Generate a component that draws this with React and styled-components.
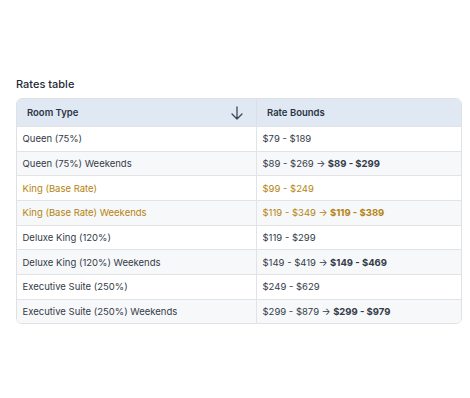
import React from "react";
import styled, { createGlobalStyle } from "styled-components";

const Global = createGlobalStyle`
  html, body { margin: 0; padding: 0; background: #ffffff; }
  body { font-family: Inter, "Noto Sans", sans-serif; color: #1f2937; }
`;

const Page = styled.div`
  padding: 76px 8px 0 16px;
  width: 470px;
  box-sizing: border-box;
`;

const Title = styled.div`
  font-size: 11px;
  font-weight: 500;
  color: #1f2937;
  line-height: 16px;
  margin-bottom: 6px;
`;

const Frame = styled.div`
  width: 446px;
  border: 1px solid #dfe1e5;
  border-radius: 6px;
  overflow: hidden;
  box-sizing: border-box;
  font-size: 9.5px;
`;

const Row = styled.div`
  display: grid;
  grid-template-columns: 239px 1fr;
  background: ${(p) => (p.$head ? "#dfe8f3" : p.$alt ? "#f7f8fa" : "#ffffff")};
  height: ${(p) => (p.$head ? "27px" : "23.66px")};
  border-bottom: ${(p) => (p.$last ? "none" : "1px solid #e1e3e6")};
`;

const HeadCell = styled.div`
  display: flex;
  align-items: center;
  justify-content: space-between;
  padding: 0 11px 0 10px;
  font-weight: 600;
  color: #2b3444;
  border-left: ${(p) => (p.$first ? "none" : "1px solid #dcdfe3")};
`;

const Cell = styled.div`
  display: flex;
  align-items: center;
  padding: 0 5.5px;
  color: ${(p) => (p.$gold ? "#b5830f" : "#333b48")};
  border-left: ${(p) => (p.$first ? "none" : "1px solid #e1e3e6")};
  white-space: nowrap;
`;

const New = styled.b`
  font-weight: 700;
`;

const Arrow = styled.span`
  margin: 0 2.5px;
`;

const SortIcon = () => (
  <svg width="16" height="16" viewBox="0 0 24 24" fill="none" stroke="#3b4452" strokeWidth="1.9" strokeLinecap="round" strokeLinejoin="round">
    <path d="M19.5 13.5 12 21m0 0-7.5-7.5M12 21V3" />
  </svg>
);

const rows = [
  ["Queen (75%)", "$79 - $189"],
  ["Queen (75%) Weekends", "$89 - $269", "$89 - $299"],
  ["King (Base Rate)", "$99 - $249", null, true],
  ["King (Base Rate) Weekends", "$119 - $349", "$119 - $389", true],
  ["Deluxe King (120%)", "$119 - $299"],
  ["Deluxe King (120%) Weekends", "$149 - $419", "$149 - $469"],
  ["Executive Suite (250%)", "$249 - $629"],
  ["Executive Suite (250%) Weekends", "$299 - $879", "$299 - $979"],
];

export default function App() {
  return (
    <>
      <Global />
      <Page>
        <Title>Rates table</Title>
        <Frame>
          <Row $head>
            <HeadCell $first>
              <span>Room Type</span>
              <SortIcon />
            </HeadCell>
            <HeadCell>Rate Bounds</HeadCell>
          </Row>
          {rows.map(([name, base, next, gold], i) => (
            <Row key={name} $alt={i % 2 === 1} $last={i === rows.length - 1}>
              <Cell $first $gold={gold}>{name}</Cell>
              <Cell $gold={gold}>
                {base}
                {next && (
                  <>
                    <Arrow>→</Arrow>
                    <New>{next}</New>
                  </>
                )}
              </Cell>
            </Row>
          ))}
        </Frame>
      </Page>
    </>
  );
}
